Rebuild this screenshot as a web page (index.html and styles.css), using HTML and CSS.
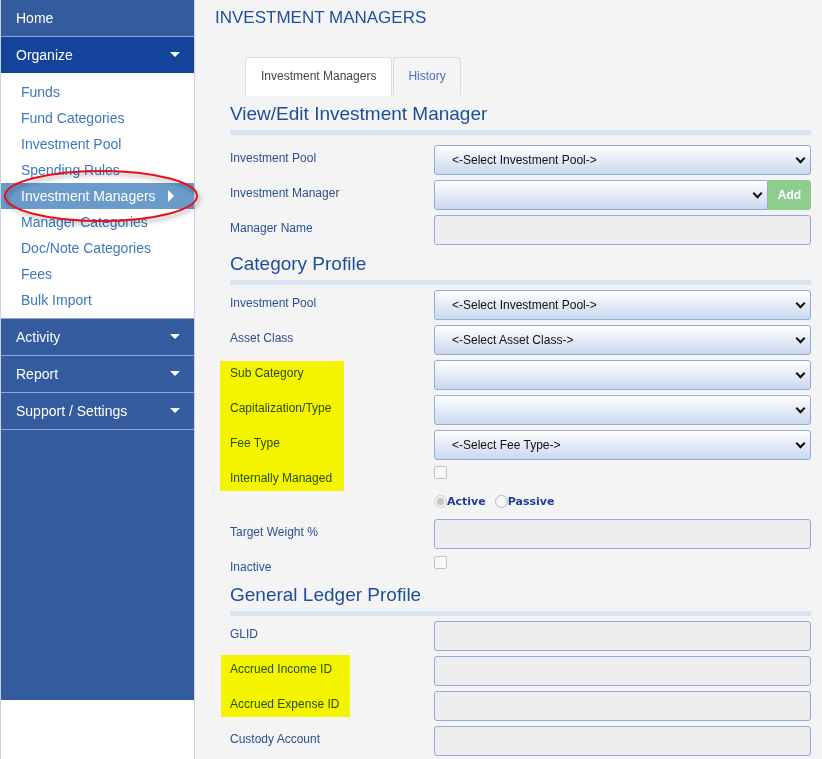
FILE: index.html
```html
<!DOCTYPE html>
<html>
<head>
    <title>Investment Managers</title>
    <meta name="viewport" content="width=device-width, initial-scale=1.0">
    <link rel="stylesheet" href="styles.css">
</head>
<body>
    <div class="layout">
        <div class="sidebar">
            <ul class="nav">
                <li class="nav-item">Home</li>
                <li class="nav-item open">Organize <span class="caret"></span></li>
                <li class="submenu">
                    <a>Funds</a>
                    <a>Fund Categories</a>
                    <a>Investment Pool</a>
                    <a>Spending Rules</a>
                    <a class="active">Investment Managers <span class="arrow"></span></a>
                    <a>Manager Categories</a>
                    <a>Doc/Note Categories</a>
                    <a>Fees</a>
                    <a>Bulk Import</a>
                </li>
                <li class="nav-item">Activity <span class="caret"></span></li>
                <li class="nav-item">Report <span class="caret"></span></li>
                <li class="nav-item">Support / Settings <span class="caret"></span></li>
            </ul>
            <svg class="circle-mark" width="200" height="60" viewBox="0 0 200 60">
                <ellipse cx="99" cy="27" rx="96" ry="25" fill="none" stroke="#e8101a" stroke-width="2"/>
            </svg>
        </div>

        <div class="main">
            <h1>INVESTMENT MANAGERS</h1>

            <div class="tabs">
                <div class="tab current">Investment Managers</div>
                <div class="tab">History</div>
            </div>

            <div class="form-area">
                <h2 class="section-title">View/Edit Investment Manager</h2>
                <div class="section-bar first"></div>

                <div class="row">
                    <label>Investment Pool</label>
                    <div class="field select-box"><span>&lt;-Select Investment Pool-&gt;</span><i class="chev"></i></div>
                </div>
                <div class="row">
                    <label>Investment Manager</label>
                    <div class="field with-btn">
                        <div class="select-box flat-right"><span></span><i class="chev"></i></div>
                        <button class="add-btn">Add</button>
                    </div>
                </div>
                <div class="row">
                    <label>Manager Name</label>
                    <div class="field text-box"></div>
                </div>

                <h2 class="section-title">Category Profile</h2>
                <div class="section-bar"></div>

                <div class="row">
                    <label>Investment Pool</label>
                    <div class="field select-box"><span>&lt;-Select Investment Pool-&gt;</span><i class="chev"></i></div>
                </div>
                <div class="row">
                    <label>Asset Class</label>
                    <div class="field select-box"><span>&lt;-Select Asset Class-&gt;</span><i class="chev"></i></div>
                </div>
                <div class="row">
                    <label>Sub Category</label>
                    <div class="field select-box"><span></span><i class="chev"></i></div>
                </div>
                <div class="row">
                    <label>Capitalization/Type</label>
                    <div class="field select-box"><span></span><i class="chev"></i></div>
                </div>
                <div class="row">
                    <label>Fee Type</label>
                    <div class="field select-box"><span>&lt;-Select Fee Type-&gt;</span><i class="chev"></i></div>
                </div>
                <div class="row short">
                    <label>Internally Managed</label>
                    <div class="field"><span class="check"></span></div>
                </div>
                <div class="row radios">
                    <label></label>
                    <div class="field">
                        <span class="radio checked"></span><span class="radio-label">Active</span>
                        <span class="radio"></span><span class="radio-label">Passive</span>
                    </div>
                </div>
                <div class="row">
                    <label>Target Weight %</label>
                    <div class="field text-box"></div>
                </div>
                <div class="row short inactive">
                    <label>Inactive</label>
                    <div class="field"><span class="check"></span></div>
                </div>

                <h2 class="section-title gl">General Ledger Profile</h2>
                <div class="section-bar"></div>

                <div class="row">
                    <label>GLID</label>
                    <div class="field text-box"></div>
                </div>
                <div class="row">
                    <label>Accrued Income ID</label>
                    <div class="field text-box"></div>
                </div>
                <div class="row">
                    <label>Accrued Expense ID</label>
                    <div class="field text-box"></div>
                </div>
                <div class="row">
                    <label>Custody Account</label>
                    <div class="field text-box"></div>
                </div>

                <div class="highlight hl-category"></div>
                <div class="highlight hl-ledger"></div>
            </div>
        </div>
    </div>
</body>
</html>
```

FILE: styles.css
```css
body {
    margin: 0;
    font-family: "Liberation Sans", Arial, sans-serif;
    background: #f4f4f4;
    overflow: hidden;
}
.layout {
    display: flex;
    height: 759px;
}

/* sidebar */
.sidebar {
    position: relative;
    width: 193px;
    flex: none;
    background: #fff;
    border-left: 1px solid #c5d3ea;
    border-right: 1px solid #c5d3ea;
}
.nav {
    list-style: none;
    margin: 0;
    padding: 0 0 270px;
    background: #345b9e;
}
.nav-item {
    position: relative;
    height: 36px;
    line-height: 36px;
    padding-left: 15px;
    color: #fff;
    font-size: 14px;
    border-bottom: 1px solid #8ca6d2;
}
.nav-item.open {
    background: #13439a;
    border-bottom: none;
}
.caret {
    position: absolute;
    right: 14px;
    top: 15px;
    border-left: 5px solid transparent;
    border-right: 5px solid transparent;
    border-top: 5px solid #fff;
}
.submenu {
    background: #fff;
    padding: 6px 0 5px;
    border-bottom: 1px solid #8ca6d2;
}
.submenu a {
    display: block;
    position: relative;
    height: 26px;
    line-height: 26px;
    padding-left: 20px;
    font-size: 14px;
    color: #3b78bf;
}
.submenu a.active {
    background: #6b9bcb;
    color: #fff;
}
.arrow {
    position: absolute;
    left: 167px;
    top: 7px;
    border-top: 6px solid transparent;
    border-bottom: 6px solid transparent;
    border-left: 6px solid #fff;
}
.circle-mark {
    position: absolute;
    left: 1px;
    top: 169px;
    overflow: visible;
    filter: drop-shadow(2px 3px 2px rgba(0, 0, 0, 0.35));
}

/* main */
.main {
    flex: 1;
    padding: 0 11px 0 20px;
}
h1 {
    margin: 8px 0 0;
    font-size: 17px;
    line-height: 20px;
    font-weight: normal;
    color: #1e4f9e;
}
.tabs {
    display: flex;
    gap: 1px;
    margin: 29px 0 0 30px;
}
.tab {
    height: 37px;
    line-height: 37px;
    padding: 0 14px;
    font-size: 12px;
    color: #4f6cc6;
    background: #f4f4f4;
    border: 1px solid #dcdcdc;
    border-bottom: none;
    border-radius: 4px 4px 0 0;
}
.tab.current {
    height: 38px;
    padding: 0 15px;
    color: #444;
    background: #fff;
}

.form-area {
    position: relative;
    padding-left: 15px;
}
.section-title {
    margin: 7px 0 0;
    font-size: 19px;
    line-height: 24px;
    font-weight: normal;
    color: #1f4d98;
}
.form-area > .section-title:first-child {
    margin-top: 6px;
}
.section-title.gl {
    margin-top: 7px;
}
.section-bar {
    height: 5px;
    margin: 4px 0 5px;
    background: #d9e4f3;
}
.section-bar.first {
    margin-bottom: 10px;
}

.row {
    display: flex;
    height: 30px;
    margin-bottom: 5px;
}
.row label {
    width: 204px;
    flex: none;
    padding-top: 6px;
    font-size: 12px;
    line-height: 14px;
    color: #2b4f91;
}
.field {
    flex: 1;
    display: flex;
    align-items: flex-start;
}
.select-box, .text-box {
    box-sizing: border-box;
    height: 30px;
    border: 1px solid #91acd9;
    border-radius: 3px;
}
.select-box {
    position: relative;
    flex: 1;
    display: flex;
    align-items: center;
    padding-left: 17px;
    font-size: 12px;
    color: #111;
    background: linear-gradient(#ffffff, #c9d7ee);
}
.text-box {
    background: #eeeeee;
}
.chev {
    position: absolute;
    right: 6px;
    top: 9px;
    width: 5px;
    height: 5px;
    border-right: 2px solid #111;
    border-bottom: 2px solid #111;
    transform: rotate(45deg);
}
.with-btn .flat-right {
    border-radius: 3px 0 0 3px;
}
.add-btn {
    width: 43px;
    height: 30px;
    border: none;
    border-radius: 0 3px 3px 0;
    background: #8fcd8f;
    color: #fff;
    font-family: "Liberation Sans", Arial, sans-serif;
    font-size: 12px;
    font-weight: bold;
    padding: 0;
}

.row.short {
    height: 22px;
    margin-bottom: 2px;
}
.check {
    box-sizing: border-box;
    width: 13px;
    height: 13px;
    margin-top: 1px;
    border: 1px solid #c4c4c4;
    border-radius: 2px;
    background: #f8f8f8;
}
.row.inactive .check {
    margin-top: 2px;
}
.row.radios {
    height: 24px;
    margin-bottom: 6px;
}
.row.radios .field {
    align-items: center;
}
.radio {
    box-sizing: border-box;
    width: 13px;
    height: 13px;
    border-radius: 50%;
    border: 1px solid #bcbcbc;
    background: #f6f6f6;
}
.radio.checked {
    background: radial-gradient(circle, #c8c8c8 0 3.5px, #f0f0f0 4px);
    border-color: #cfcfcf;
}
.radio-label {
    margin: 0 9px 0 0;
    font-family: "DejaVu Sans", Verdana, sans-serif;
    font-size: 11px;
    font-weight: bold;
    color: #1e3d95;
}

/* marker annotations */
.highlight {
    position: absolute;
    background: #ffff00;
    mix-blend-mode: multiply;
}
.hl-category {
    left: 5px;
    top: 259px;
    width: 124px;
    height: 130px;
}
.hl-ledger {
    left: 6px;
    top: 553px;
    width: 129px;
    height: 62px;
}
```
